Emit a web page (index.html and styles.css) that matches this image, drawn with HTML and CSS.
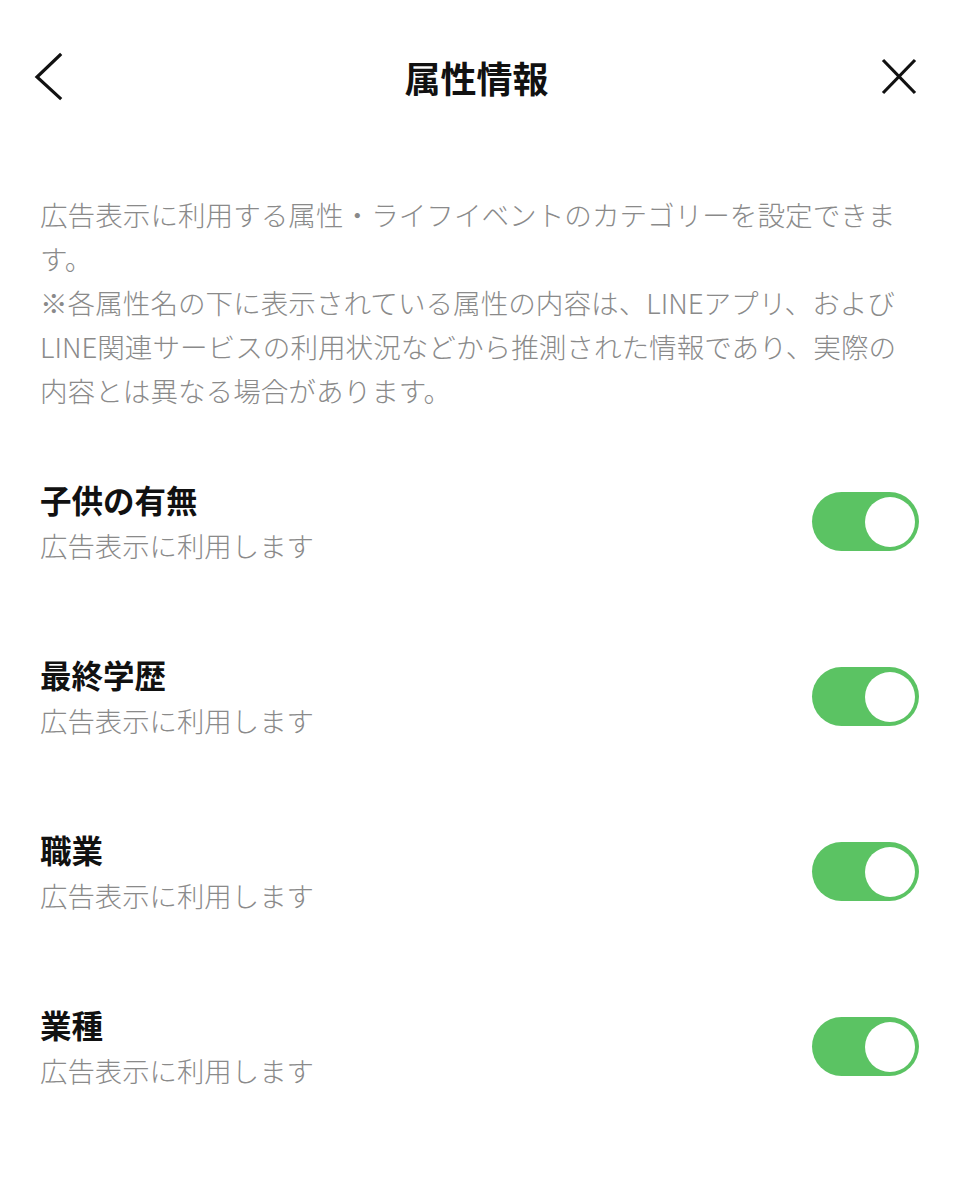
FILE: index.html
```html
<!DOCTYPE html>
<html lang="ja">
<head>
<meta charset="utf-8">
<title>属性情報</title>
<link rel="stylesheet" href="styles.css">
</head>
<body>
<div class="page">
  <header class="header">
    <div class="hleft">
      <svg class="icon-back" width="40" height="50" viewBox="0 0 40 50" aria-hidden="true">
        <polyline points="30,3 7,25 30,46" fill="none" stroke="#111" stroke-width="3.2" stroke-linecap="square" stroke-linejoin="miter"/>
      </svg>
    </div>
    <h1 class="title">属性情報</h1>
    <div class="hright">
      <svg class="icon-close" width="40" height="40" viewBox="0 0 40 40" aria-hidden="true">
        <line x1="4" y1="3" x2="36" y2="36" stroke="#111" stroke-width="3.2"/>
        <line x1="36" y1="3" x2="4" y2="36" stroke="#111" stroke-width="3.2"/>
      </svg>
    </div>
  </header>

  <p class="desc">
    <span class="line">広告表示に利用する属性・ライフイベントのカテゴリーを設定できま</span>
    <span class="line">す。</span>
    <span class="line">※各属性名の下に表示されている属性の内容は、LINEアプリ、および</span>
    <span class="line">LINE関連サービスの利用状況などから推測された情報であり、実際の</span>
    <span class="line">内容とは異なる場合があります。</span>
  </p>

  <ul class="list">
    <li class="row">
      <div class="text">
        <div class="name">子供の有無</div>
        <div class="sub">広告表示に利用します</div>
      </div>
      <div class="toggle on"><span class="knob"></span></div>
    </li>
    <li class="row">
      <div class="text">
        <div class="name">最終学歴</div>
        <div class="sub">広告表示に利用します</div>
      </div>
      <div class="toggle on"><span class="knob"></span></div>
    </li>
    <li class="row">
      <div class="text">
        <div class="name">職業</div>
        <div class="sub">広告表示に利用します</div>
      </div>
      <div class="toggle on"><span class="knob"></span></div>
    </li>
    <li class="row">
      <div class="text">
        <div class="name">業種</div>
        <div class="sub">広告表示に利用します</div>
      </div>
      <div class="toggle on"><span class="knob"></span></div>
    </li>
  </ul>
</div>
</body>
</html>
```

FILE: styles.css
```css
html, body {
  margin: 0;
  padding: 0;
  background: #fff;
}

body {
  font-family: "Noto Sans CJK JP", "Noto Sans", sans-serif;
  color: #111;
}

.page {
  width: 958px;
}

.header {
  height: 154px;
  display: grid;
  grid-template-columns: 1fr auto 1fr;
  align-items: center;
  padding: 0 39px 0 30px;
  box-sizing: border-box;
}

.hleft {
  display: flex;
  justify-content: flex-start;
}

.hright {
  display: flex;
  justify-content: flex-end;
}

.icon-back,
.icon-close {
  display: block;
}

.title {
  margin: 0;
  font-size: 36px;
  font-weight: 700;
  line-height: 50px;
  color: #111;
  padding-left: 4px;
}

.desc {
  margin: 0;
  padding: 38px 40px 0 40px;
  font-size: 27.6px;
  font-weight: 300;
  line-height: 44px;
  color: #8a8a8a;
}

.desc .line {
  display: block;
  white-space: nowrap;
}

.list {
  list-style: none;
  margin: 0;
  padding: 22px 0 0 0;
}

.row {
  height: 175px;
  display: flex;
  align-items: center;
  justify-content: space-between;
  padding: 0 39px 0 40px;
}

.name {
  font-size: 31.5px;
  font-weight: 700;
  line-height: 46px;
  color: #111;
}

.sub {
  font-size: 27.4px;
  font-weight: 300;
  line-height: 46px;
  color: #8a8a8a;
}

.toggle {
  width: 107px;
  height: 59px;
  border-radius: 30px;
  background: #5bc363;
  box-sizing: border-box;
  padding: 4.5px;
  display: flex;
  justify-content: flex-end;
  align-items: center;
}

.knob {
  width: 50px;
  height: 50px;
  border-radius: 50%;
  background: #fff;
}
```
